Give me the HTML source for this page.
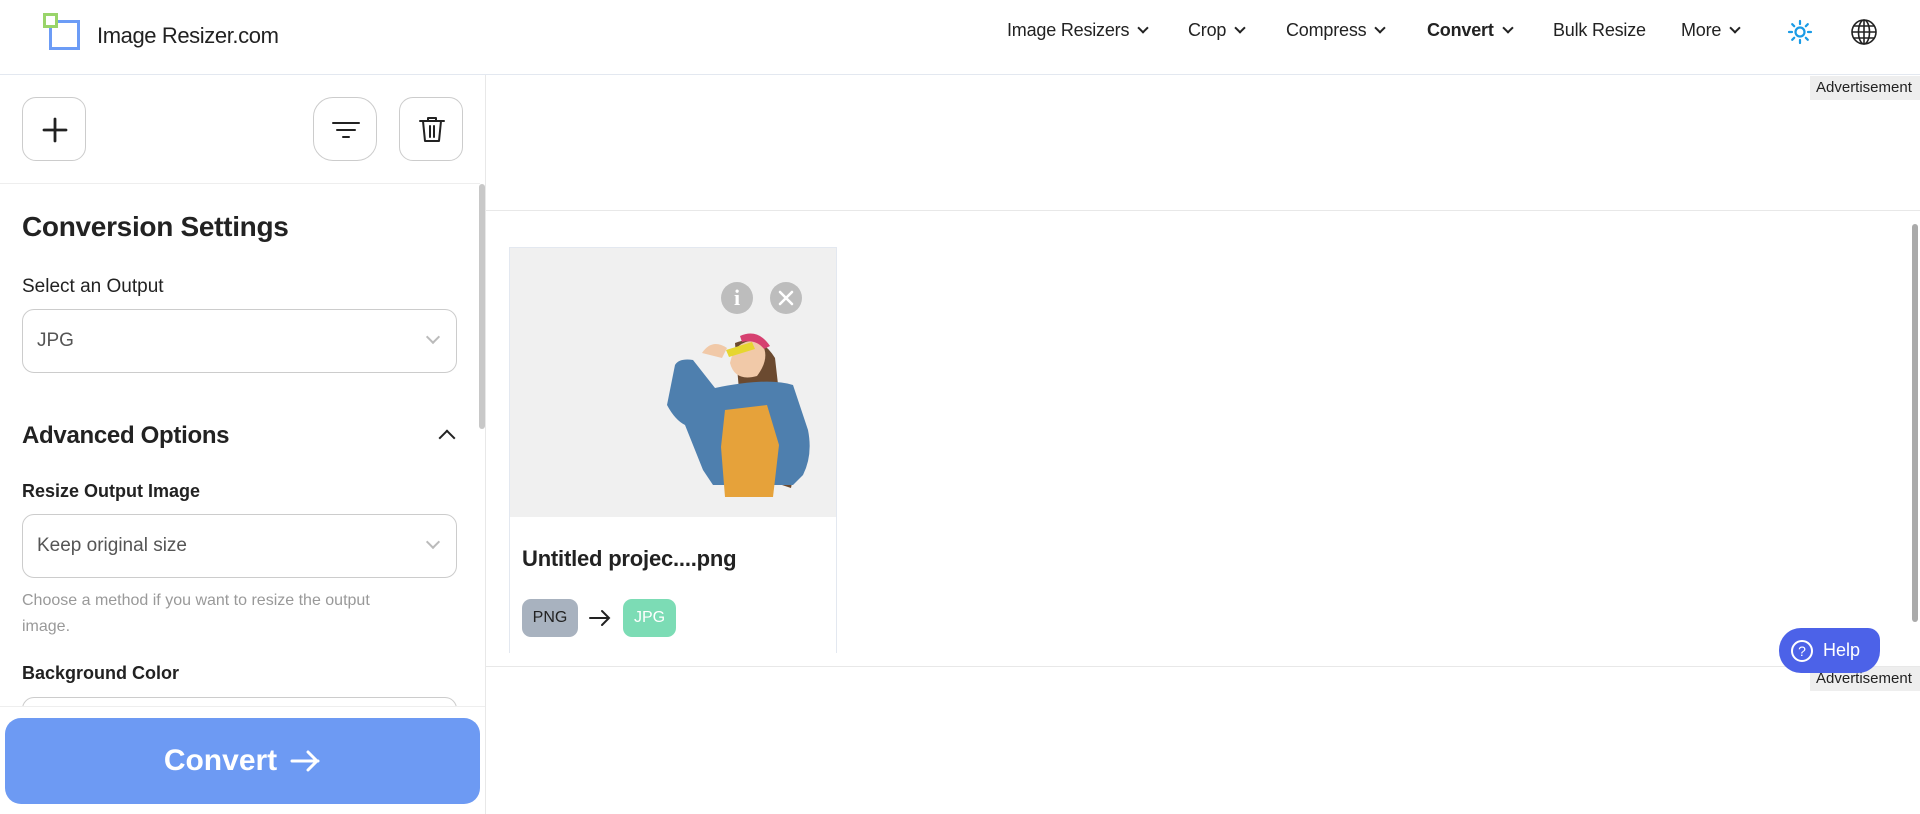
<!DOCTYPE html>
<html><head><meta charset="utf-8">
<style>
*{box-sizing:border-box;margin:0;padding:0}
body{width:1920px;height:814px;overflow:hidden;background:#fff;font-family:"Liberation Sans",sans-serif;color:#222;position:relative}
.abs{position:absolute}
.nav{position:absolute;top:20px;font-size:18px;color:#222;white-space:nowrap;letter-spacing:-0.2px}
.chev{display:inline-block;width:8px;height:8px;border-right:2px solid #222;border-bottom:2px solid #222;transform:rotate(45deg);margin-left:10px;position:relative;top:-4px}
.btn{position:absolute;width:64px;height:64px;border:1px solid #ccc;border-radius:14px;background:#fff}
.sel{position:absolute;left:22px;width:435px;height:64px;border:1px solid #ccc;border-radius:12px;font-size:19px;color:#555;padding:20px 14px}
.sel .c{position:absolute;right:18px;top:22px;width:10px;height:10px;border-right:2px solid #bbb;border-bottom:2px solid #bbb;transform:rotate(45deg)}
.lbl{position:absolute;left:22px;font-size:19px;color:#222}
.ad{position:absolute;right:0;width:110px;height:24px;background:#eee;font-size:15px;color:#222;padding:3px 0 0 6px}
</style></head><body>
<!-- header -->
<div class="abs" style="left:49px;top:20px;width:31px;height:30px;border:3px solid #6c9cf6"></div>
<div class="abs" style="left:43px;top:13px;width:15px;height:15px;border:3px solid #99d46a;background:#fff"></div>
<div class="abs" style="left:97px;top:23px;font-size:22px;color:#222;letter-spacing:-0.4px">Image Resizer.com</div>
<div class="nav" style="left:1007px">Image Resizers<span class="chev"></span></div>
<div class="nav" style="left:1188px">Crop<span class="chev"></span></div>
<div class="nav" style="left:1286px">Compress<span class="chev"></span></div>
<div class="nav" style="left:1427px;font-weight:bold">Convert<span class="chev"></span></div>
<div class="nav" style="left:1553px">Bulk Resize</div>
<div class="nav" style="left:1681px">More<span class="chev"></span></div>
<svg class="abs" style="left:1786px;top:18px" width="28" height="28" viewBox="0 0 28 28" stroke="#1a9be6" stroke-width="2.2" fill="none" stroke-linecap="round"><circle cx="14" cy="14" r="4.5"/><path d="M14 3v3M14 22v3M3 14h3M22 14h3M6.2 6.2l2 2M19.8 19.8l2 2M6.2 21.8l2-2M19.8 8.2l2-2"/></svg>
<svg class="abs" style="left:1850px;top:18px" width="28" height="28" viewBox="0 0 28 28" stroke="#222" stroke-width="1.6" fill="none"><circle cx="14" cy="14" r="12"/><ellipse cx="14" cy="14" rx="5.5" ry="12"/><path d="M2 14h24M4 8h20M4 20h20M14 2v24"/></svg>
<div class="abs" style="left:0;top:74px;width:1920px;height:1px;background:#e3e8f0"></div>
<!-- sidebar -->
<div class="abs" style="left:485px;top:75px;width:1px;height:739px;background:#e8e8e8"></div>
<div class="btn" style="left:22px;top:97px"><svg width="64" height="64" viewBox="0 0 64 64"><path d="M32 21v22M21 32h22" stroke="#222" stroke-width="2.8" stroke-linecap="round"/></svg></div>
<div class="btn" style="left:313px;top:97px;border-radius:20px"><svg width="64" height="64" viewBox="0 0 64 64" stroke="#222" stroke-width="2" stroke-linecap="round"><path d="M19 25h26M23 32h18M29 39h6"/></svg></div>
<div class="btn" style="left:399px;top:97px"><svg width="64" height="64" viewBox="0 0 64 64" stroke="#222" stroke-width="2" fill="none" stroke-linecap="round" stroke-linejoin="round"><path d="M20 23h24M28 23v-3h8v3M23 23l2 20h14l2-20M30 28v11M34 28v11"/></svg></div>
<div class="abs" style="left:0;top:183px;width:480px;height:1px;background:#eee"></div>
<div class="abs" style="left:479px;top:184px;width:6px;height:245px;background:#c8c8c8;border-radius:3px"></div>
<div class="abs" style="left:22px;top:211px;font-size:28px;font-weight:bold;color:#222;letter-spacing:-0.3px">Conversion Settings</div>
<div class="lbl" style="top:276px">Select an Output</div>
<div class="sel" style="top:309px">JPG<span class="c"></span></div>
<div class="abs" style="left:22px;top:422px;font-size:24px;font-weight:bold;color:#222;letter-spacing:-0.3px">Advanced Options</div>
<div class="abs" style="left:441px;top:432px;width:12px;height:12px;border-left:2.5px solid #222;border-top:2.5px solid #222;transform:rotate(45deg)"></div>
<div class="lbl" style="top:481px;font-weight:bold;font-size:18px">Resize Output Image</div>
<div class="sel" style="top:514px">Keep original size<span class="c"></span></div>
<div class="abs" style="left:22px;top:588px;font-size:16px;color:#999;line-height:26px;width:400px">Choose a method if you want to resize the output image.</div>
<div class="lbl" style="top:663px;font-weight:bold;font-size:18px">Background Color</div>
<div class="abs" style="left:22px;top:697px;width:435px;height:30px;border:1px solid #ccc;border-radius:12px"></div>
<div class="abs" style="left:0;top:706px;width:485px;height:108px;background:#fff;border-top:1px solid #eee"></div>
<div class="abs" style="left:5px;top:718px;width:475px;height:86px;background:#6d9af3;border-radius:16px;color:#fff;font-size:30px;font-weight:bold;display:flex;align-items:center;justify-content:center">Convert<svg style="margin-left:12px" width="32" height="24" viewBox="0 0 32 24" stroke="#fff" stroke-width="3" fill="none" stroke-linecap="round" stroke-linejoin="round"><path d="M3 12h26M19 3l9 9-9 9"/></svg></div>
<!-- main -->
<div class="ad" style="top:76px">Advertisement</div>
<div class="abs" style="left:486px;top:210px;width:1434px;height:1px;background:#e8e8e8"></div>
<div class="abs" style="left:1912px;top:224px;width:6px;height:398px;background:#aaa;border-radius:3px"></div>
<div class="abs" style="left:509px;top:247px;width:328px;height:406px;border:1px solid #e3e8f0;border-bottom:none"></div>
<div class="abs" style="left:510px;top:248px;width:326px;height:269px;background:#f0f0f0"></div>
<svg class="abs" style="left:640px;top:318px" width="180" height="180" viewBox="0 0 180 180">
<path d="M95 25 q25-10 40 15 l8 70 q15 30 8 60 l-45-15z" fill="#6b4a30"/>
<path d="M75 70 l-22-28 q-14-2-18 5 l-8 40 q8 15 18 20 l18 45 l10 15 l80 0 l10-10 q10-20 5-45 l-15-45 q-25-8-78 3z" fill="#4e7fae"/>
<path d="M85 92 l42-5 l12 40 l-6 52 l-48 0 l-4-50 z" fill="#e6a23a"/>
<path d="M90 45 q5-25 30-22 q12 15-3 35 q-22 6-27-13z" fill="#f1c9a8"/>
<path d="M86 32 l26-8 l3 7 l-26 8z" fill="#e6d630"/>
<path d="M100 18 q18-8 30 10 l-6 3 q-8-10-22-7z" fill="#d64070"/>
<path d="M62 35 q10-15 25 -5 l-5 10z" fill="#f1c9a8"/>
</svg>
<div class="abs" style="left:721px;top:282px;width:32px;height:32px;border-radius:50%;background:#bdbdbd;color:#fff;font:bold 22px 'Liberation Serif',serif;text-align:center;line-height:32px">i</div>
<div class="abs" style="left:770px;top:282px;width:32px;height:32px;border-radius:50%;background:#bdbdbd"><svg width="32" height="32"><path d="M10 10l12 12M22 10l-12 12" stroke="#fff" stroke-width="2.6" stroke-linecap="round"/></svg></div>
<div class="abs" style="left:522px;top:546px;font-size:22px;font-weight:bold;color:#222;letter-spacing:-0.2px">Untitled projec....png</div>
<div class="abs" style="left:522px;top:599px;width:56px;height:38px;border-radius:9px;background:#a8b2bf;font-size:16px;color:#222;text-align:center;line-height:38px">PNG</div>
<svg class="abs" style="left:588px;top:608px" width="24" height="20" viewBox="0 0 24 20" stroke="#222" stroke-width="2" fill="none" stroke-linecap="round"><path d="M2 10h19M14 3l7 7-7 7"/></svg>
<div class="abs" style="left:623px;top:599px;width:53px;height:38px;border-radius:9px;background:#7cdcb5;font-size:16px;color:#fff;text-align:center;line-height:38px">JPG</div>
<div class="abs" style="left:486px;top:666px;width:1434px;height:1px;background:#e8e8e8"></div>
<div class="ad" style="top:667px">Advertisement</div>
<div class="abs" style="left:1779px;top:628px;width:101px;height:45px;background:#4c62e8;border-radius:22px 12px 22px 22px;color:#fff;font-size:18px;display:flex;align-items:center;padding-left:12px"><span style="display:inline-block;width:22px;height:22px;border:2px solid #fff;border-radius:50%;font-size:14px;line-height:18px;text-align:center;margin-right:10px">?</span>Help</div>
</body></html>
